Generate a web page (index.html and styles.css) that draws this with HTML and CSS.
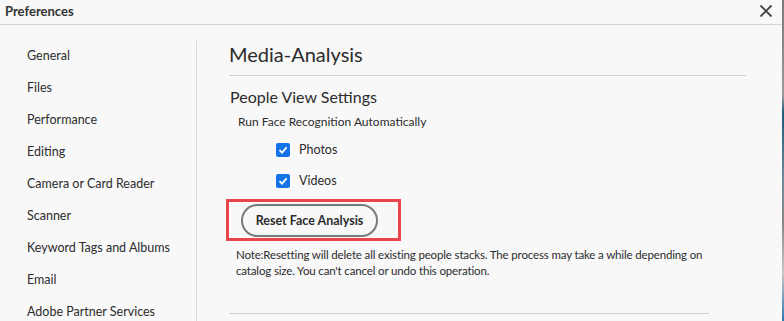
FILE: index.html
```html
<!DOCTYPE html>
<html lang="en">
<head>
  <meta charset="UTF-8">
  <title>Preferences</title>
  <link rel="stylesheet" href="styles.css">
</head>
<body>
  <div class="window">
    <div class="dialog">
      <div class="titlebar">
        <span class="title">Preferences</span>
        <span class="close">
          <svg width="14" height="14" viewBox="0 0 14 14"><path d="M1.5 1.5 L12.5 12.5 M12.5 1.5 L1.5 12.5" stroke="#444" stroke-width="1.8" fill="none"/></svg>
        </span>
      </div>

      <div class="main">
        <ul class="sidebar">
          <li>General</li>
          <li>Files</li>
          <li>Performance</li>
          <li>Editing</li>
          <li>Camera or Card Reader</li>
          <li>Scanner</li>
          <li>Keyword Tags and Albums</li>
          <li>Email</li>
          <li>Adobe Partner Services</li>
        </ul>

        <div class="content">
          <h1>Media-Analysis</h1>
          <h2>People View Settings</h2>
          <div class="label">Run Face Recognition Automatically</div>

          <label class="check">
            <span class="box"><svg width="10" height="10" viewBox="0 0 10 10"><path d="M1.5 5.2 L4 7.6 L8.6 2.4" stroke="#fff" stroke-width="1.8" fill="none"/></svg></span>
            Photos
          </label>
          <label class="check">
            <span class="box"><svg width="10" height="10" viewBox="0 0 10 10"><path d="M1.5 5.2 L4 7.6 L8.6 2.4" stroke="#fff" stroke-width="1.8" fill="none"/></svg></span>
            Videos
          </label>

          <div class="highlight">
            <button class="reset">Reset Face Analysis</button>
          </div>

          <p class="note">Note:Resetting will delete all existing people stacks. The process may take a while depending on catalog size. You can't cancel or undo this operation.</p>

          <div class="bottom-rule"></div>
        </div>
      </div>
    </div>
    <div class="edge"></div>
  </div>
</body>
</html>
```

FILE: styles.css
```css
body {
  margin: 0;
  padding: 0;
  font-family: 'Lato', 'Noto Sans', sans-serif;
  color: #2c2c2c;
  background: #f8f8f8;
  overflow: hidden;
}

.window {
  display: flex;
  width: 784px;
  height: 321px;
  overflow: hidden;
}

.dialog {
  width: 782px;
  height: 321px;
  background: #f8f8f8;
}

.edge {
  width: 2px;
  height: 321px;
  background: linear-gradient(#7a7a7a 0, #9a9a9a 30%, #1e5a7a 35%, #6a8a9a 55%, #8a8a8a 70%, #c8c8c8 85%, #2a7ab0 100%);
}

.titlebar {
  height: 22px;
  border-bottom: 1px solid #d4d4d4;
  display: flex;
  justify-content: space-between;
  align-items: center;
  padding: 0 9px 2px 5px;
}

.title {
  font-size: 13px;
  font-weight: bold;
  color: #333;
}

.close {
  display: flex;
}

.main {
  display: flex;
}

.sidebar {
  list-style: none;
  margin: 15px 0 0 0;
  padding: 0 0 0 27px;
  width: 169px;
}

.sidebar li {
  height: 32px;
  line-height: 32px;
  font-size: 12.5px;
  white-space: nowrap;
}

.content {
  margin-top: 16px;
  border-left: 1px solid #d8d8d8;
  padding-left: 32px;
  width: 517px;
  height: 281px;
}

h1 {
  font-size: 20px;
  font-weight: normal;
  line-height: 26px;
  margin: 0;
  padding-bottom: 8px;
  border-bottom: 1px solid #d0d0d0;
}

h2 {
  font-size: 16px;
  font-weight: normal;
  line-height: 22px;
  margin: 10px 0 0 1px;
}

.label {
  font-size: 12px;
  line-height: 18px;
  margin: 5px 0 0 9px;
}

.check {
  display: flex;
  align-items: center;
  gap: 9px;
  font-size: 12.5px;
  margin-left: 47px;
  height: 31px;
}

.check:first-of-type {
  margin-top: 3px;
}

.box {
  width: 14px;
  height: 14px;
  border-radius: 2px;
  background: #1473e6;
  display: flex;
  align-items: center;
  justify-content: center;
}

.highlight {
  box-sizing: border-box;
  margin: 3px 0 0 -3px;
  width: 175px;
  height: 42px;
  border: 3px solid #e8444c;
  display: flex;
  align-items: center;
  padding-left: 12px;
}

.reset {
  font-family: inherit;
  font-size: 12.5px;
  font-weight: bold;
  color: #2c2c2c;
  background: #f8f8f8;
  border: 2px solid #7a7a7a;
  border-radius: 17px;
  height: 33px;
  width: 137px;
  padding: 0;
}

.note {
  font-size: 11.5px;
  letter-spacing: -0.15px;
  line-height: 16px;
  margin: 6px 0 0 7px;
  width: 475px;
}

.bottom-rule {
  margin-top: 34px;
  width: 480px;
  border-top: 1px solid #d0d0d0;
}
```
